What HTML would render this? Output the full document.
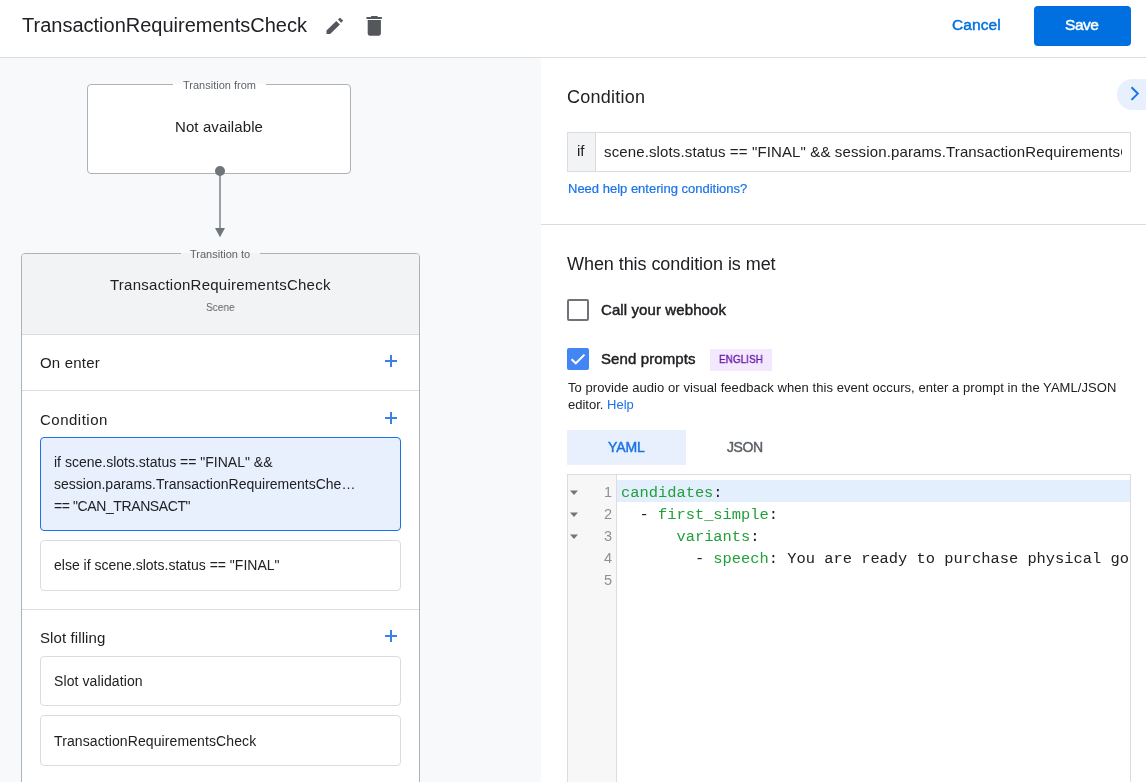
<!DOCTYPE html>
<html><head><meta charset="utf-8">
<style>
*{box-sizing:border-box;margin:0;padding:0}
html,body{width:1146px;height:782px;overflow:hidden;background:#fff;font-family:"Liberation Sans",sans-serif;color:#202124}
.a{position:absolute;white-space:pre;will-change:transform}
.hdr{position:absolute;left:0;top:0;width:1146px;height:58px;border-bottom:1px solid #dadce0;background:#fff}
.left{position:absolute;left:0;top:58px;width:541px;height:724px;background:#f8f9fa}
.right{position:absolute;left:541px;top:58px;width:605px;height:724px;background:#fff}
.box{position:absolute;border:1px solid #aeb2b7;border-radius:4px}
.card{position:absolute;border:1px solid #dadce0;border-radius:4px;background:#fff}
.plus{position:absolute;width:12px;height:12px}
.plus:before,.plus:after{content:"";position:absolute;background:#3b80e8}
.plus:before{left:5px;top:0;width:2px;height:12px}
.plus:after{left:0;top:5px;width:12px;height:2px}
.div{position:absolute;height:1px;background:#dadce0}
.mono{font-family:"Liberation Mono",monospace}
</style></head><body>
<!-- header -->
<div class="hdr"></div>
<div class="a" style="left:21.5px;top:14.8px;font-size:20px;line-height:20px">TransactionRequirementsCheck</div>
<svg class="a" style="left:322px;top:13px" width="24" height="24" viewBox="0 0 24 24"><path fill="#54575c" d="M4.5 17.6V21H8.2L17.9 11.4L14.3 7.9Z"/><path fill="#54575c" stroke="#54575c" stroke-width="0.6" stroke-linejoin="round" d="M16.2 6.5L18 4.9L20.9 7.6L19.2 9.4Z"/></svg>
<svg class="a" style="left:362px;top:13px" width="24" height="24" viewBox="0 0 24 24"><path fill="#54575c" d="M9.3 2.9h6.1l.4 1.2H19.9V5.9H4.5V4.1H8.9zM5.7 7h13.2v13.6c0 1.2-.9 2.1-2.1 2.1H7.8c-1.2 0-2.1-.9-2.1-2.1z"/></svg>
<div class="a" style="left:951.5px;top:16.6px;font-size:15.5px;line-height:15.5px;color:#0070e0;-webkit-text-stroke:0.45px #0070e0;letter-spacing:0.1px">Cancel</div>
<div class="a" style="left:1034px;top:6px;width:97px;height:40px;border-radius:4px;background:#0070e0"></div>
<div class="a" style="left:1064.8px;top:16.6px;font-size:15.5px;line-height:15.5px;color:#fff;-webkit-text-stroke:0.45px #fff;letter-spacing:-0.45px">Save</div>

<!-- left panel -->
<div class="left"></div>
<!-- transition from -->
<div class="box" style="left:87px;top:84px;width:264px;height:90px;background:#fff"></div>
<div class="a" style="left:173px;top:77px;width:93px;height:14px;background:linear-gradient(#f8f9fa 0,#f8f9fa 7.5px,#fff 7.5px)"></div>
<div class="a" style="left:183px;top:80px;font-size:11px;line-height:11px;color:#5f6368">Transition from</div>
<div class="a" style="left:175px;top:119.2px;font-size:15px;line-height:15px;letter-spacing:0.1px">Not available</div>
<div class="a" style="left:219px;top:170px;width:2px;height:60px;background:#9aa0a6"></div>
<div class="a" style="left:215px;top:165.5px;width:10px;height:10px;border-radius:50%;background:#70757a"></div>
<svg class="a" style="left:214px;top:227px" width="12" height="12" viewBox="0 0 12 12"><path fill="#70757a" d="M1 1H11L6 10.3Z"/></svg>
<!-- transition to -->
<div class="box" style="left:21px;top:253px;width:399px;height:600px;background:#fff;overflow:hidden">
  <div style="position:absolute;left:0;top:0;width:397px;height:81px;background:#f1f3f4;border-bottom:1px solid #dadce0"></div>
</div>
<div class="a" style="left:180.5px;top:246px;width:79px;height:14px;background:linear-gradient(#f8f9fa 0,#f8f9fa 7.5px,#f1f3f4 7.5px)"></div>
<div class="a" style="left:190px;top:249.1px;font-size:11px;line-height:11px;color:#5f6368">Transition to</div>
<div class="a" style="left:110px;top:276.9px;font-size:15px;line-height:15px;letter-spacing:0.25px">TransactionRequirementsCheck</div>
<div class="a" style="left:205.8px;top:301.8px;font-size:11px;line-height:11px;color:#5f6368;transform:scaleX(0.92);transform-origin:0 0">Scene</div>

<div class="a" style="left:40px;top:355.3px;font-size:15px;line-height:15px;letter-spacing:0.2px">On enter</div>
<div class="plus" style="left:385px;top:355px"></div>
<div class="div" style="left:22px;top:390px;width:397px"></div>
<div class="a" style="left:40px;top:411.9px;font-size:15px;line-height:15px;letter-spacing:0.5px">Condition</div>
<div class="plus" style="left:385px;top:411.5px"></div>
<div class="card" style="left:40px;top:437px;width:361px;height:94px;background:#e8f0fe;border-color:#1a73e8"></div>
<div class="a" style="left:54px;top:455.1px;font-size:14px;line-height:14px;color:#202124">if scene.slots.status == "FINAL" &amp;&amp;</div>
<div class="a" style="left:54px;top:476.8px;font-size:14px;line-height:14px;color:#202124">session.params.TransactionRequirementsChe…</div>
<div class="a" style="left:54px;top:499px;font-size:14px;line-height:14px;color:#202124;letter-spacing:-0.4px">== "CAN_TRANSACT"</div>
<div class="card" style="left:40px;top:540px;width:361px;height:51px"></div>
<div class="a" style="left:54px;top:558.3px;font-size:14px;line-height:14px;color:#202124">else if scene.slots.status == "FINAL"</div>
<div class="div" style="left:22px;top:609px;width:397px"></div>
<div class="a" style="left:40px;top:629.6px;font-size:15px;line-height:15px;letter-spacing:0.1px">Slot filling</div>
<div class="plus" style="left:385px;top:630px"></div>
<div class="card" style="left:40px;top:656px;width:361px;height:50px"></div>
<div class="a" style="left:54px;top:674.1px;font-size:14px;line-height:14px;color:#202124;letter-spacing:0.1px">Slot validation</div>
<div class="card" style="left:40px;top:715px;width:361px;height:51px"></div>
<div class="a" style="left:54px;top:734.1px;font-size:14px;line-height:14px;color:#202124;letter-spacing:0.1px">TransactionRequirementsCheck</div>

<!-- right panel -->
<div class="right"></div>
<div class="a" style="left:567.3px;top:87.5px;font-size:18px;line-height:18px;letter-spacing:0.25px">Condition</div>
<div class="a" style="left:1117px;top:79px;width:40px;height:31px;border-radius:15.5px 0 0 15.5px;background:#e8f0fe"></div>
<svg class="a" style="left:1126px;top:84px" width="20" height="20" viewBox="0 0 20 20"><path fill="none" stroke="#1a73e8" stroke-width="2" d="M5.5 3.3L11.8 9.6L5.5 15.9"/></svg>
<div class="a" style="left:567px;top:132px;width:564px;height:40px;border:1px solid #dadce0;overflow:hidden">
  <div style="position:absolute;left:0;top:0;width:28px;height:38px;background:#f1f3f4;border-right:1px solid #dadce0"></div>
</div>
<div class="a" style="left:577px;top:143px;font-size:15px;line-height:15px">if</div>
<div class="a" style="left:604px;top:143px;width:518px;overflow:hidden;font-size:15px;line-height:17px;letter-spacing:0.13px">scene.slots.status == "FINAL" &amp;&amp; session.params.TransactionRequirementsCheck.resultType == "CAN_TRANSACT"</div>
<div class="a" style="left:567.5px;top:182px;font-size:13px;line-height:13px;color:#1a73e8;-webkit-text-stroke:0.2px #1a73e8">Need help entering conditions?</div>
<div class="div" style="left:541px;top:224px;width:605px"></div>
<div class="a" style="left:567px;top:254.7px;font-size:18px;line-height:18px;letter-spacing:-0.06px">When this condition is met</div>
<div class="a" style="left:567px;top:299px;width:22px;height:22px;border:2px solid #6f7276;border-radius:2px"></div>
<div class="a" style="left:601px;top:302.3px;font-size:15px;line-height:15px;-webkit-text-stroke:0.45px #202124;letter-spacing:0.1px">Call your webhook</div>
<div class="a" style="left:567px;top:348px;width:22px;height:22px;border-radius:2px;background:#4285f4"></div>
<svg class="a" style="left:567px;top:348px" width="22" height="22" viewBox="0 0 22 22"><path fill="none" stroke="#fff" stroke-width="2" d="M4.5 11.2L8.8 15.3L17.5 6.6"/></svg>
<div class="a" style="left:601px;top:351px;font-size:15px;line-height:15px;-webkit-text-stroke:0.45px #202124;letter-spacing:0.1px">Send prompts</div>
<div class="a" style="left:710px;top:349px;width:62px;height:22px;background:#f3e8fd"></div>
<div class="a" style="left:719px;top:353.6px;font-size:11.3px;line-height:11.3px;color:#681da8;-webkit-text-stroke:0.35px #681da8;transform:scaleX(0.885);transform-origin:0 0">ENGLISH</div>
<div class="a" style="left:567.5px;top:381px;font-size:13px;line-height:13px;color:#202124;letter-spacing:0.06px">To provide audio or visual feedback when this event occurs, enter a prompt in the YAML/JSON</div>
<div class="a" style="left:567.5px;top:398px;font-size:13px;line-height:13px;color:#202124">editor. <span style="color:#1a73e8">Help</span></div>
<div class="a" style="left:567px;top:430px;width:119px;height:35px;background:#e8f0fe"></div>
<div class="a" style="left:608px;top:440.3px;font-size:14px;line-height:14px;color:#1a73e8;-webkit-text-stroke:0.45px #1a73e8;letter-spacing:-0.1px">YAML</div>
<div class="a" style="left:727px;top:440.3px;font-size:14px;line-height:14px;color:#5f6368;-webkit-text-stroke:0.45px #5f6368;letter-spacing:-0.4px">JSON</div>
<!-- editor -->
<div class="a" style="left:567px;top:474px;width:564px;height:400px;border:1px solid #dadce0;background:#fff;overflow:hidden">
  <div style="position:absolute;left:0;top:0;width:49px;height:400px;background:#f7f7f7;border-right:1px solid #ddd"></div>
  <div style="position:absolute;left:49px;top:5px;width:520px;height:22px;background:#e3effd"></div>
</div>
<div class="a" style="left:569px;top:481px;width:43px;font-size:14.5px;line-height:22px;color:#909090;text-align:right">1
2
3
4
5</div>
<svg class="a" style="left:568px;top:480px" width="12" height="70" viewBox="0 0 12 70"><path fill="#757575" d="M2 10.6H10L6 14.9Z M2 32.6H10L6 36.9Z M2 54.6H10L6 58.9Z"/></svg>
<div class="a mono" style="left:621px;top:481.7px;width:509px;overflow:hidden;font-size:15.4px;line-height:22px;color:#202124"><span style="color:#22a03c">candidates</span>:
  - <span style="color:#22a03c">first_simple</span>:
      <span style="color:#22a03c">variants</span>:
        - <span style="color:#22a03c">speech</span>: You are ready to purchase physical go
</div>
</body></html>
